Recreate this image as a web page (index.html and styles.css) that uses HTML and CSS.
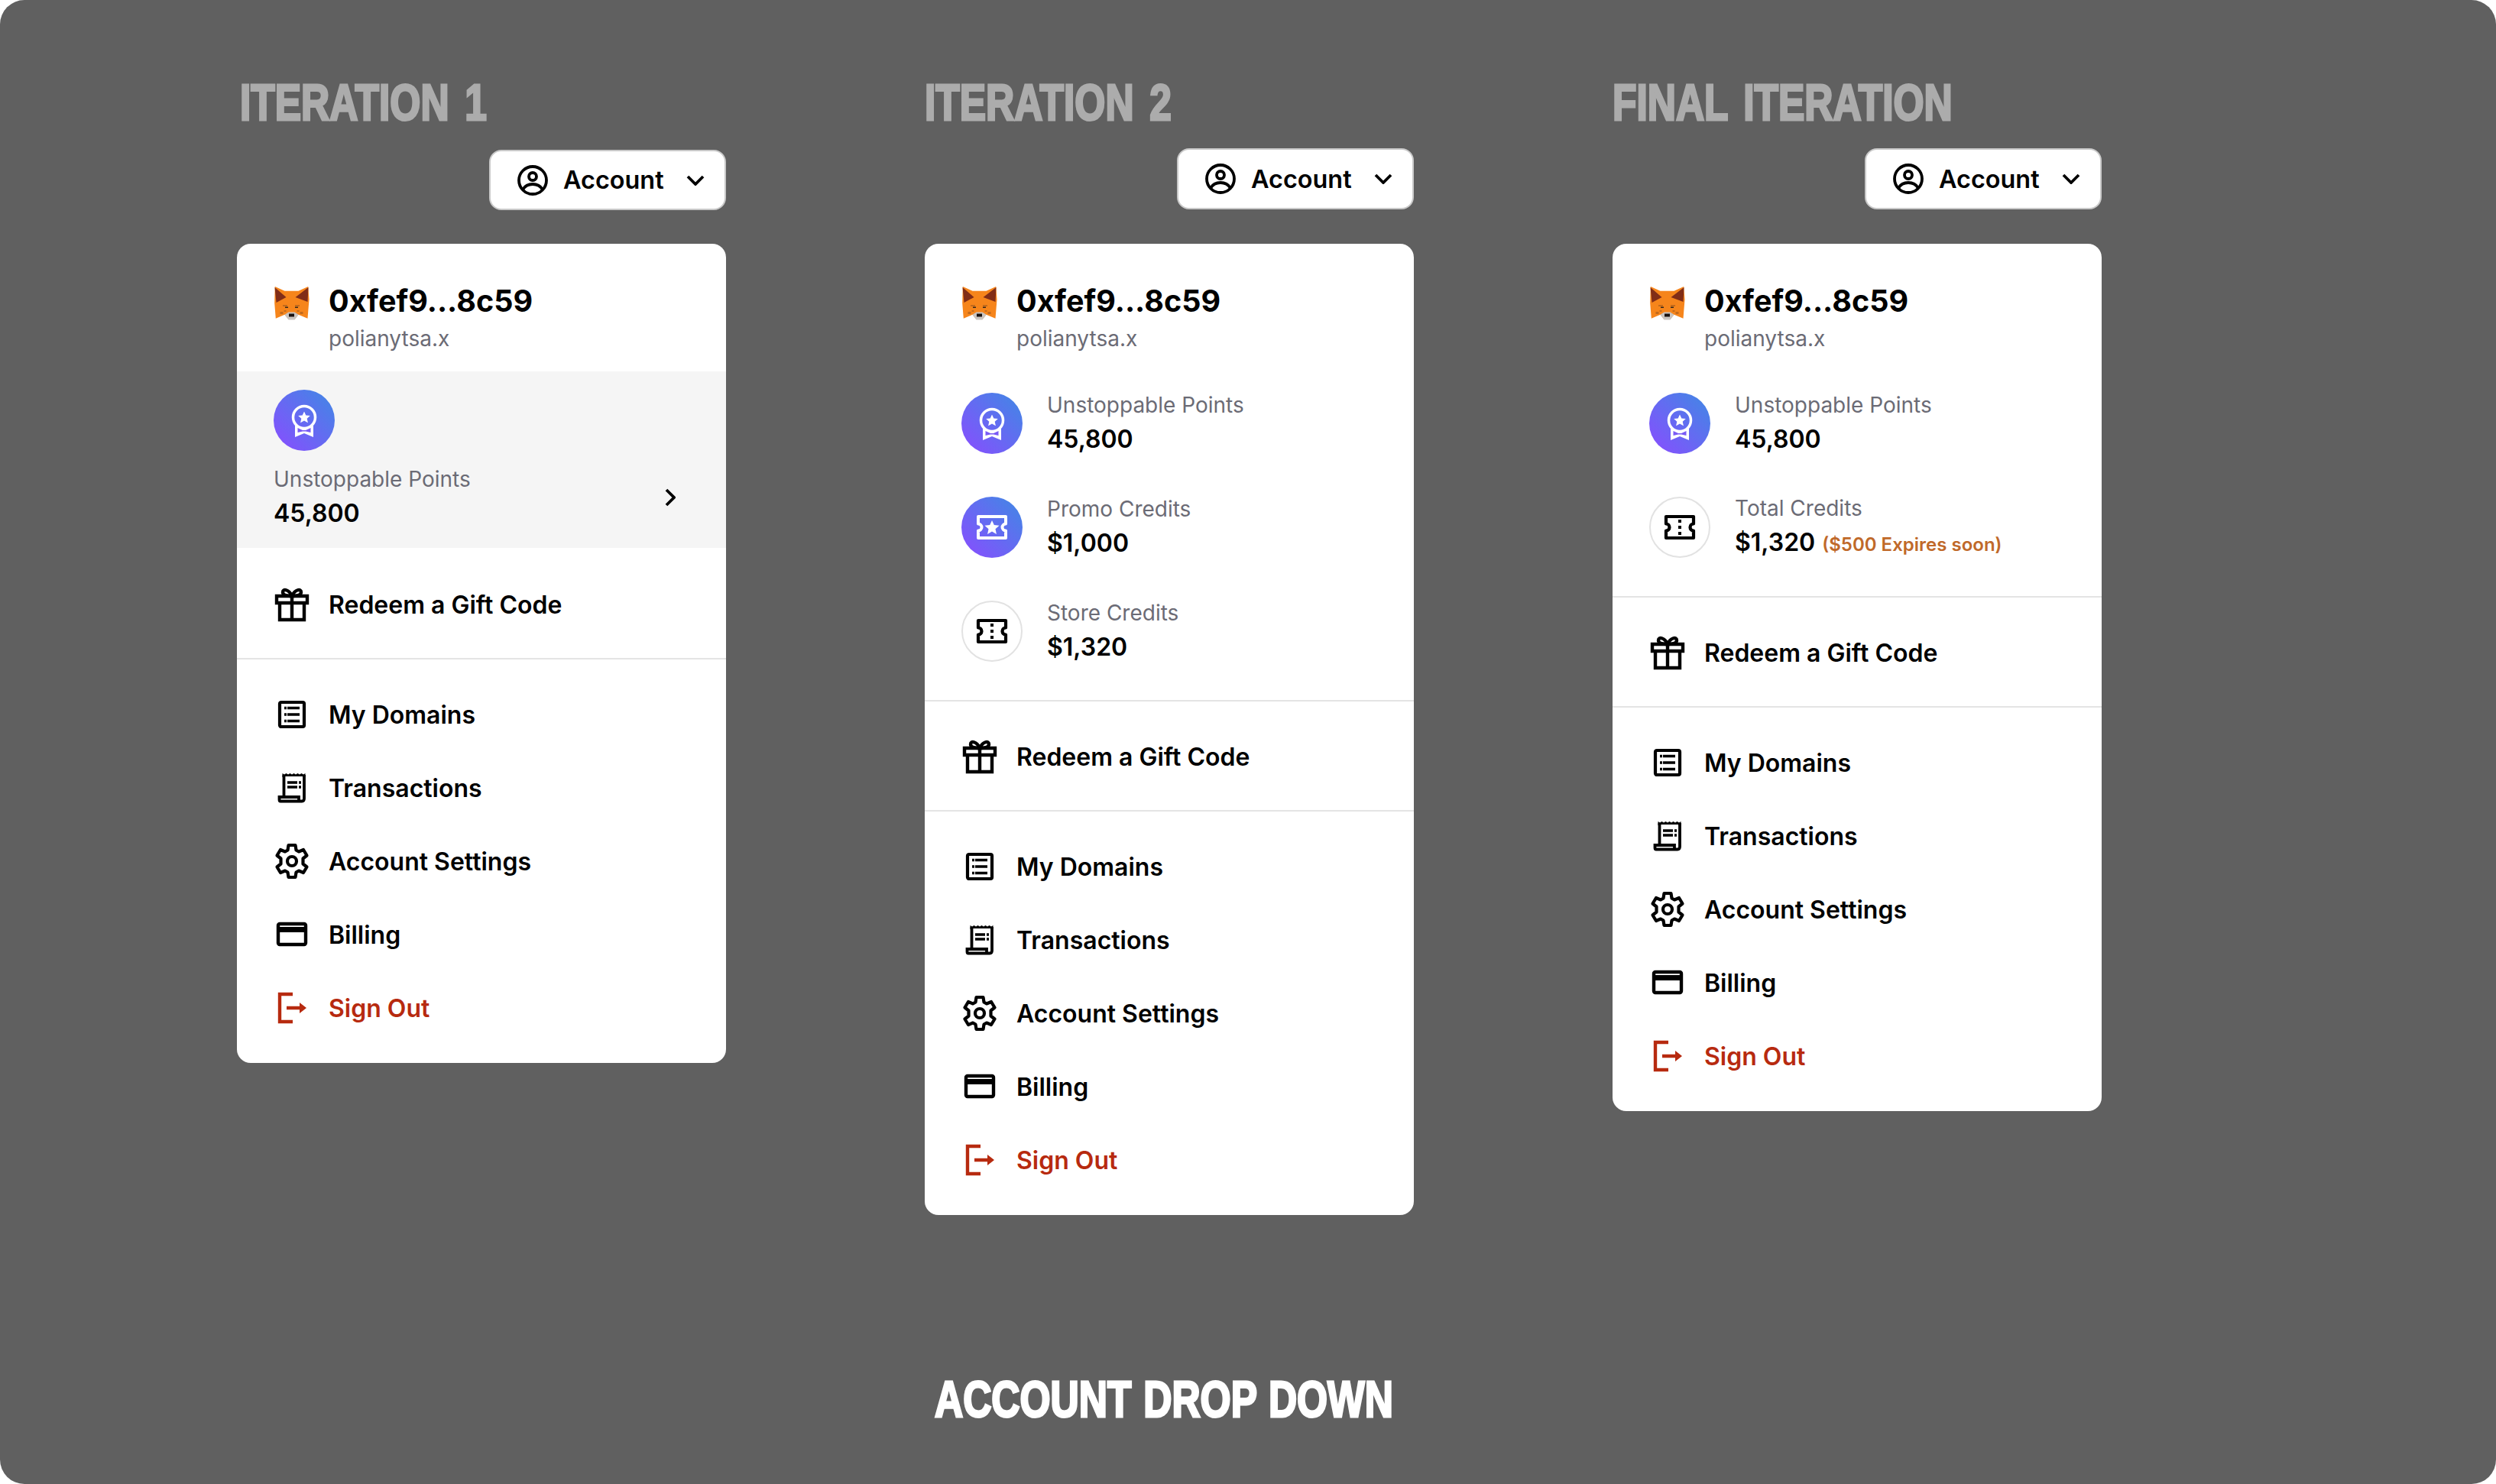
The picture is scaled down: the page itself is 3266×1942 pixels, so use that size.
FILE: index.html
```html
<!DOCTYPE html>
<html lang="en">
<head>
<meta charset="utf-8">
<title>Account Drop Down</title>
<link rel="stylesheet" href="styles.css">
</head>
<body>
<svg class="sprite" aria-hidden="true">
  <defs>
    <pattern id="ear" width="2" height="2" patternUnits="userSpaceOnUse"><rect width="2" height="2" fill="#d8431c"/><rect width="1" height="1" fill="#2a1712"/><rect x="1" y="1" width="1" height="1" fill="#2a1712"/></pattern>
    <symbol id="fox" viewBox="0 0 47 44">
      <path fill="#f6851b" d="M1.3 0 14 5.7H32L44.7 0 46 17 44 41.7 32 36.7 27 43H19L14 36.7 2.3 41.7 .7 21.7Z"/>
      <path fill="url(#ear)" d="M1 1 16 14 3 21ZM45 1 28 14 44 20Z"/>
      <path fill="#c9c4c0" d="M14 36.7 19 33.5H27L32 36.7 27 43.5H19Z"/>
      <rect x="19.5" y="35.5" width="7" height="4" fill="#1a1210"/>
      <path fill="#c26a1c" d="M11.5 24h6v2h-6zM27.5 24h6v2h-6zM8 33h4v3H8zM34 33h4v3h-4zM13 31h3v2h-3zM30 31h3v2h-3z"/>
      <path fill="#33261c" d="M14.5 26.5h4v1.5h-4zM27.5 26.5h4v1.5h-4z"/>
    </symbol>
    <symbol id="user" viewBox="0 0 40 40"><g fill="none" stroke="currentColor" stroke-width="3.8"><circle cx="20" cy="20" r="18"/><circle cx="20" cy="15" r="5"/><path d="M7 32c3-5 8-7 13-7s10 2 13 7"/></g></symbol>
    <symbol id="chev" viewBox="0 0 24 14"><path fill="none" stroke="currentColor" stroke-width="3.8" d="M2 2 12 12 22 2"/></symbol>
    <symbol id="chevr" viewBox="0 0 14 24"><path fill="none" stroke="currentColor" stroke-width="3.8" d="M2 2 12 12 2 22"/></symbol>
    <symbol id="gift" viewBox="0 0 48 48"><g fill="none" stroke="currentColor" stroke-width="4.4"><path d="M8 22V44H40V22M4 13H44V22H4ZM24 13V44"/><path d="M24 13C20 4 12 3 12 8c0 3 3 5 12 5ZM24 13C28 4 36 3 36 8c0 3-3 5-12 5Z"/></g></symbol>
    <symbol id="list" viewBox="0 0 48 48"><g fill="none" stroke="currentColor"><rect x="8" y="8" width="32" height="32" rx="2" stroke-width="4.200"/><path stroke-width="3.500" d="M18 15.500H34M18 24H34M18 32.500H34M14 15.500H17M14 24H17M14 32.500H17"/></g></symbol>
    <symbol id="receipt" viewBox="0 0 48 48"><g fill="none" stroke="currentColor" stroke-width="3.800"><path d="M13.500 36V7M40 7V38c0 3-1.500 3.500-3 3.500H9c-1 0-1.500-.5-1.500-2V36H33V41"/></g><path fill="none" stroke="currentColor" stroke-width="3.400" d="M18 17H31M18 23H31M33 17H36M33 23H36"/><path fill="currentColor" d="M11.500 10V5l2.500 1.500 2.500-1.500 2.500 1.500 2.500-1.500 2.500 1.500 2.500-1.500 2.500 1.500 2.500-1.500 2.500 1.500 2.500-1.500 2.500 1.500 2.500-1.500V10H38V9H14V10Z"/></symbol>
    <symbol id="gear" viewBox="0 0 48 48"><g fill="none" stroke="currentColor" stroke-width="4.200" stroke-linejoin="round"><path d="M19.500 3H28.500L29.500 9.500 33 11.500 39 9 43.500 16.500 38.500 20.500V27.500L43.500 31.500 39 39 33 36.500 29.500 38.500 28.500 45H19.500L18.500 38.500 15 36.500 9 39 4.500 31.500 9.500 27.500V20.500L4.500 16.500 9 9 15 11.500 18.500 9.500Z"/><circle cx="24" cy="24" r="6"/></g></symbol>
    <symbol id="card" viewBox="0 0 48 48"><rect x="6" y="10" width="36" height="27" rx="2" fill="none" stroke="currentColor" stroke-width="4.400"/><rect x="4" y="14" width="40" height="7" fill="currentColor"/></symbol>
    <symbol id="logout" viewBox="0 0 48 48"><g fill="none" stroke="currentColor" stroke-width="4.400"><path d="M25 6H8V42H25M17 24H38"/><path fill="currentColor" stroke="none" d="M34 17 43 24 34 31Z"/></g></symbol>
    <symbol id="medal" viewBox="0 0 80 80"><circle cx="40" cy="36" r="14.500" fill="none" stroke="#fff" stroke-width="3.500"/><path fill="#fff" d="M40 28.500l2.300 5 5.500.6-4.100 3.700 1.200 5.400-4.900-2.800-4.900 2.800 1.200-5.400-4.100-3.700 5.500-.6z"/><path fill="#fff" d="M28 45 35 51H45L52 45V62L40 57 28 62Z"/><path fill="#7a5af5" d="M31.500 50 38 53H42L48.500 50V56L42 54.500H38L31.500 56Z"/></symbol>
    <symbol id="promo" viewBox="0 0 80 80"><path fill="none" stroke="#fff" stroke-width="4" stroke-linejoin="round" d="M22 26H58V35.500A4.500 4.500 0 0 0 58 44.500V54H22V44.500A4.500 4.500 0 0 0 22 35.500Z"/><path fill="#fff" d="M40 31l2.800 6.100 6.700.7-5 4.500 1.400 6.600L40 45.500l-5.900 3.400 1.400-6.600-5-4.500 6.700-.7z"/></symbol>
    <symbol id="store" viewBox="0 0 80 80"><path fill="none" stroke="#000" stroke-width="4.200" stroke-linejoin="round" d="M22 26H58V35.500A4.500 4.500 0 0 0 58 44.500V54H22V44.500A4.500 4.500 0 0 0 22 35.500Z"/><path fill="#000" d="M38 30h4v4h-4zM38 38h4v4h-4zM38 46h4v4h-4z"/></symbol>
  </defs>
</svg>

<main class="page">
  <div class="columns">

    <section class="col col-first">
      <h2 class="iter-title">ITERATION 1</h2>
      <button class="account-btn"><svg class="i-user"><use href="#user"/></svg><span class="account-label">Account</span><svg class="i-chev"><use href="#chev"/></svg></button>
      <div class="card">
        <div class="wallet"><svg class="fox"><use href="#fox"/></svg><div><div class="addr">0xfef9...8c59</div><div class="domain">polianytsa.x</div></div></div>
        <div class="points-hover">
          <div class="disc disc-grad"><svg class="disc-icon"><use href="#medal"/></svg></div>
          <div class="points-row"><div class="stat-text"><div class="stat-label">Unstoppable Points</div><div class="stat-value">45,800</div></div><svg class="i-chevr"><use href="#chevr"/></svg></div>
        </div>
        <div class="menu-block sep"><div class="menu-row"><svg class="mi"><use href="#gift"/></svg>Redeem a Gift Code</div></div>
        <div class="menu-block">
          <div class="menu-row"><svg class="mi"><use href="#list"/></svg>My Domains</div>
          <div class="menu-row"><svg class="mi"><use href="#receipt"/></svg>Transactions</div>
          <div class="menu-row"><svg class="mi"><use href="#gear"/></svg>Account Settings</div>
          <div class="menu-row"><svg class="mi"><use href="#card"/></svg>Billing</div>
          <div class="menu-row danger"><svg class="mi"><use href="#logout"/></svg>Sign Out</div>
        </div>
      </div>
    </section>

    <section class="col">
      <h2 class="iter-title">ITERATION 2</h2>
      <button class="account-btn"><svg class="i-user"><use href="#user"/></svg><span class="account-label">Account</span><svg class="i-chev"><use href="#chev"/></svg></button>
      <div class="card">
        <div class="wallet"><svg class="fox"><use href="#fox"/></svg><div><div class="addr">0xfef9...8c59</div><div class="domain">polianytsa.x</div></div></div>
        <div class="stats">
          <div class="stat"><div class="disc disc-grad"><svg class="disc-icon"><use href="#medal"/></svg></div><div class="stat-text"><div class="stat-label">Unstoppable Points</div><div class="stat-value">45,800</div></div></div>
          <div class="stat"><div class="disc disc-grad"><svg class="disc-icon"><use href="#promo"/></svg></div><div class="stat-text"><div class="stat-label">Promo Credits</div><div class="stat-value">$1,000</div></div></div>
          <div class="stat"><div class="disc disc-line"><svg class="disc-icon"><use href="#store"/></svg></div><div class="stat-text"><div class="stat-label">Store Credits</div><div class="stat-value">$1,320</div></div></div>
        </div>
        <div class="menu-block sep top-sep"><div class="menu-row"><svg class="mi"><use href="#gift"/></svg>Redeem a Gift Code</div></div>
        <div class="menu-block">
          <div class="menu-row"><svg class="mi"><use href="#list"/></svg>My Domains</div>
          <div class="menu-row"><svg class="mi"><use href="#receipt"/></svg>Transactions</div>
          <div class="menu-row"><svg class="mi"><use href="#gear"/></svg>Account Settings</div>
          <div class="menu-row"><svg class="mi"><use href="#card"/></svg>Billing</div>
          <div class="menu-row danger"><svg class="mi"><use href="#logout"/></svg>Sign Out</div>
        </div>
      </div>
    </section>

    <section class="col">
      <h2 class="iter-title">FINAL ITERATION</h2>
      <button class="account-btn"><svg class="i-user"><use href="#user"/></svg><span class="account-label">Account</span><svg class="i-chev"><use href="#chev"/></svg></button>
      <div class="card">
        <div class="wallet"><svg class="fox"><use href="#fox"/></svg><div><div class="addr">0xfef9...8c59</div><div class="domain">polianytsa.x</div></div></div>
        <div class="stats">
          <div class="stat"><div class="disc disc-grad"><svg class="disc-icon"><use href="#medal"/></svg></div><div class="stat-text"><div class="stat-label">Unstoppable Points</div><div class="stat-value">45,800</div></div></div>
          <div class="stat"><div class="disc disc-line"><svg class="disc-icon"><use href="#store"/></svg></div><div class="stat-text"><div class="stat-label">Total Credits</div><div class="stat-value">$1,320 <span class="expires">($500 Expires soon)</span></div></div></div>
        </div>
        <div class="menu-block sep top-sep"><div class="menu-row"><svg class="mi"><use href="#gift"/></svg>Redeem a Gift Code</div></div>
        <div class="menu-block">
          <div class="menu-row"><svg class="mi"><use href="#list"/></svg>My Domains</div>
          <div class="menu-row"><svg class="mi"><use href="#receipt"/></svg>Transactions</div>
          <div class="menu-row"><svg class="mi"><use href="#gear"/></svg>Account Settings</div>
          <div class="menu-row"><svg class="mi"><use href="#card"/></svg>Billing</div>
          <div class="menu-row danger"><svg class="mi"><use href="#logout"/></svg>Sign Out</div>
        </div>
      </div>
    </section>

  </div>
  <h1 class="page-title">ACCOUNT DROP DOWN</h1>
</main>
</body>
</html>
```

FILE: styles.css
```css
* { box-sizing: border-box; }
html, body { margin: 0; padding: 0; background: #fff; }
body { font-family: Inter, "Liberation Sans", sans-serif; color: #000; }
.sprite { position: absolute; width: 0; height: 0; overflow: hidden; }

.page {
  width: 3266px;
  height: 1942px;
  background: #606060;
  border-radius: 32px;
  padding: 100px 0 0 310px;
  display: flex;
  flex-direction: column;
}
.columns { display: flex; gap: 260px; align-items: flex-start; flex: 1; }
.col { width: 640px; display: flex; flex-direction: column; }

.iter-title, .page-title {
  margin: 0;
  font-family: "Liberation Sans", sans-serif;
  font-weight: 700;
  -webkit-text-stroke: 3px currentColor;
  word-spacing: 8px;
  white-space: nowrap;
  transform-origin: left center;
  transform: scaleX(0.78);
}
.iter-title {
  font-size: 66px;
  line-height: 68px;
  height: 68px;
  color: #acacac;
}
.col-first .iter-title { margin-left: 4px; }
.page-title {
  font-size: 66px;
  line-height: 68px;
  color: #fff;
  word-spacing: 2px;
  margin: 0 0 77px 913px;
}

.account-btn {
  align-self: flex-end;
  width: 310px;
  height: 80px;
  margin: 26px 0 0;
  padding: 0 0 0 35px;
  display: flex;
  align-items: center;
  background: #fff;
  border: 2px solid #c9c9c9;
  border-radius: 16px;
  font: 600 32.4px Inter, sans-serif;
  color: #000;
}
.col-first .account-btn { margin-top: 28px; height: 79px; }
.col-first .card { margin-top: 44px; }
.i-user { width: 40px; height: 40px; }
.account-label { margin-left: 20px; }
.i-chev { width: 24px; height: 14px; margin-left: 29px; }

.card {
  margin-top: 45px;
  background: #fff;
  border-radius: 18px;
  overflow: hidden;
}

.wallet { display: flex; gap: 24px; padding: 48px 48px 0; height: 167px; }
.fox { width: 48px; height: 44px; margin-top: 8px; flex: none; }
.addr { font-size: 39.5px; font-weight: 700; line-height: 54px; }
.domain { font-size: 28px; color: #6b6b75; line-height: 40px; margin-top: 2px; }

.disc { width: 80px; height: 80px; border-radius: 50%; flex: none; }
.disc-grad { background: linear-gradient(225deg, #4a80e8 15%, #7f55fb 85%); }
.disc-line { border: 2px solid #e2e2e2; }
.disc-icon { display: block; width: 80px; height: 80px; }
.disc-line .disc-icon { margin: -2px; }

.points-hover { background: #f5f5f5; padding: 24px 48px 0; height: 231px; }
.points-row { display: flex; align-items: center; justify-content: space-between; margin-top: 18px; padding-right: 18px; }
.i-chevr { width: 14px; height: 24px; }

.stats { display: flex; flex-direction: column; gap: 56px; padding: 28px 48px 50px; }
.stat { display: flex; gap: 32px; align-items: center; height: 80px; }
.stat-text { margin-top: 1px; }
.stat-label { font-size: 28px; line-height: 36px; color: #6b6b75; }
.stat-value { font-size: 32px; font-weight: 600; line-height: 44px; margin-top: 5px; }
.expires { font-size: 24px; font-weight: 600; color: #c0692a; margin-left: 1px; }

.menu-block { padding: 24px 0; }
.sep { border-bottom: 2px solid #e4e4e4; padding: 26px 0 22px; }
.top-sep { border-top: 2px solid #e4e4e4; padding-top: 24px; }
.menu-row {
  height: 96px;
  padding: 0 48px;
  display: flex;
  align-items: center;
  gap: 24px;
  font-size: 32px;
  font-weight: 600;
}
.mi { width: 48px; height: 48px; flex: none; }
.danger { color: #b72a0f; }
```
